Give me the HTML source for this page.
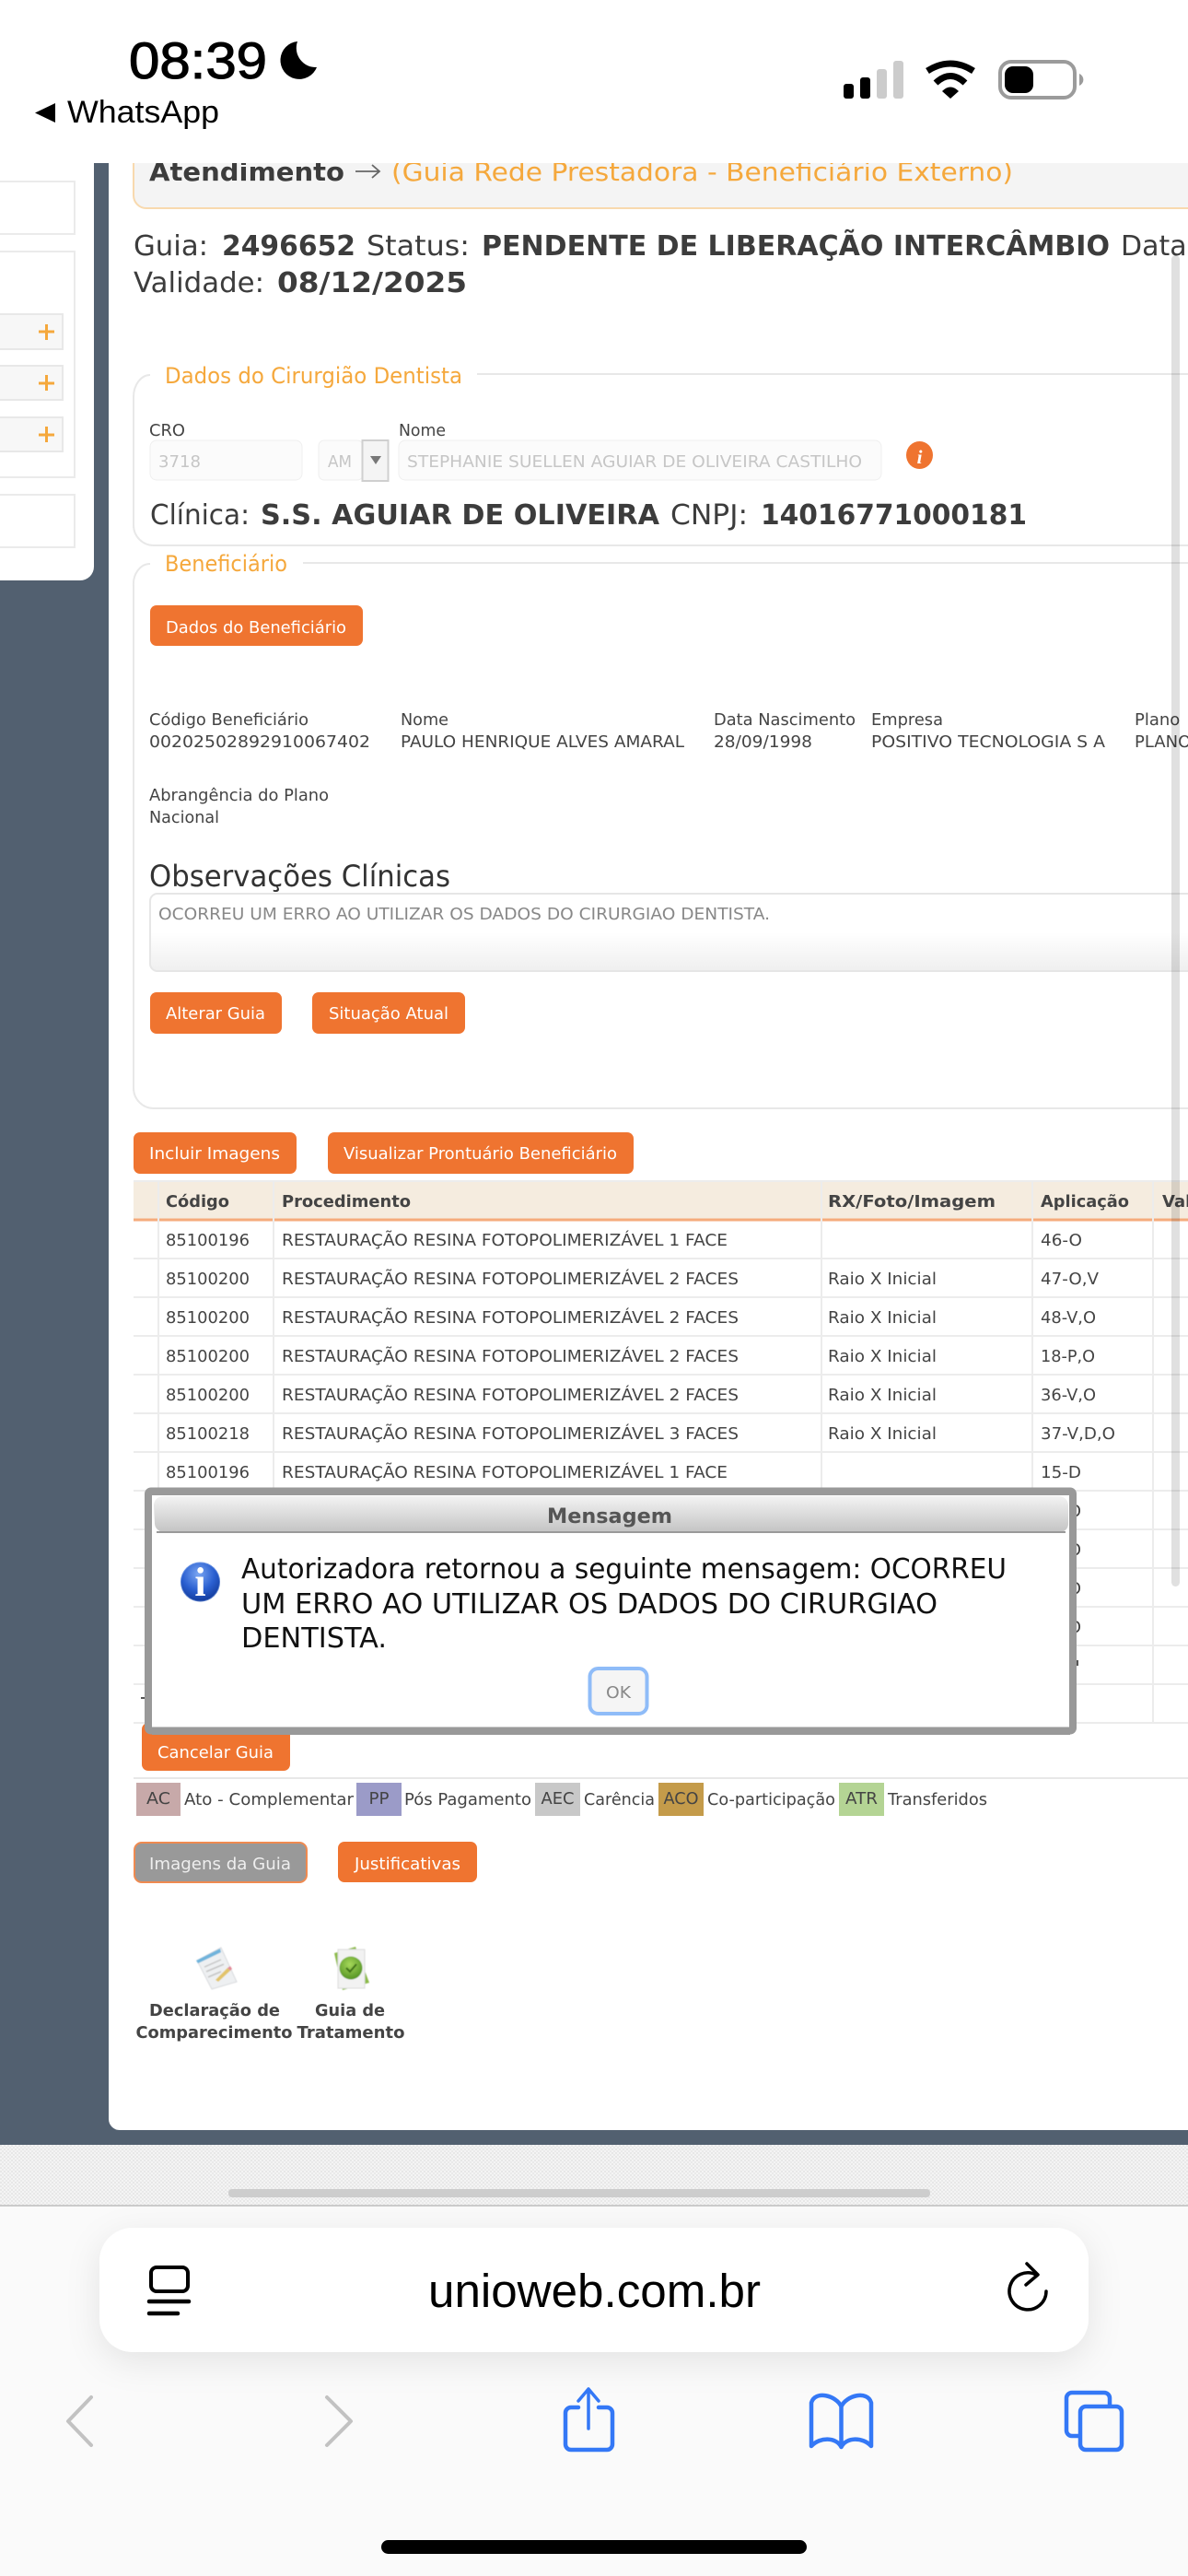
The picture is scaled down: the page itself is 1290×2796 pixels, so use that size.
<!DOCTYPE html>
<html lang="pt-BR">
<head>
<meta charset="utf-8">
<title>unioweb.com.br</title>
<style>
html,body{margin:0;padding:0;background:#fff;width:1290px;height:2796px;overflow:hidden}
svg{display:block}
text{font-family:"DejaVu Sans","Liberation Sans",sans-serif;font-size:18px;fill:#444;white-space:pre}
.b{font-weight:700}
.lg{font-size:30px;fill:#3c3c3c}
.h{font-size:28px}
.leg{font-size:24px;fill:#f5a83c}
.w{fill:#fff}
.dis{fill:#c6c6c6}
.ios{font-family:"Liberation Sans",Arial,sans-serif;fill:#000}
.msg{font-size:30px;fill:#111}
.row{stroke:#ececec;stroke-width:2}
.col{stroke:#ececec;stroke-width:2}
.bl{fill:none;stroke:#3478f6;stroke-width:4.5;stroke-linecap:round;stroke-linejoin:round}
.gr{fill:none;stroke:#c2c2c2;stroke-width:4;stroke-linecap:round;stroke-linejoin:round}
.btn{fill:#ef7430}
</style>
</head>
<body>
<svg xmlns="http://www.w3.org/2000/svg" width="1290" height="2796" viewBox="0 0 1290 2796">
<defs>
<linearGradient id="ta" x1="0" y1="0" x2="0" y2="1"><stop offset="0" stop-color="#fff"/><stop offset=".5" stop-color="#fff"/><stop offset="1" stop-color="#efefef"/></linearGradient>
<linearGradient id="tb" x1="0" y1="0" x2="0" y2="1"><stop offset="0" stop-color="#f3f3f3"/><stop offset="1" stop-color="#c4c4c4"/></linearGradient>
<radialGradient id="blue" cx=".45" cy=".3" r=".75"><stop offset="0" stop-color="#7aa6f2"/><stop offset=".55" stop-color="#2a5fd0"/><stop offset="1" stop-color="#0f3592"/></radialGradient>
<radialGradient id="grn" cx=".45" cy=".35" r=".7"><stop offset="0" stop-color="#a6d85a"/><stop offset="1" stop-color="#4f8f1f"/></radialGradient>
<pattern id="tex" width="4" height="4" patternUnits="userSpaceOnUse"><rect width="4" height="4" fill="#f4f4f4"/><rect width="2" height="2" fill="#e7e7e7"/><rect x="2" y="2" width="2" height="2" fill="#e9e9e9"/></pattern>
<filter id="sh" x="-10%" y="-40%" width="120%" height="200%"><feDropShadow dx="0" dy="10" stdDeviation="18" flood-color="#000" flood-opacity=".09"/></filter>
<filter id="soft"><feGaussianBlur stdDeviation=".5"/></filter>
</defs>

<!-- page background -->
<rect x="0" y="177" width="1290" height="2151" fill="#526070"/>
<path d="M118 177H1290V2312H130a12 12 0 0 1 -12 -12Z" fill="#fff"/>

<!-- left sidebar -->
<path d="M0 177H102V615a15 15 0 0 1 -15 15H0Z" fill="#fff"/>
<g fill="#fff" stroke="#ebebeb" stroke-width="2">
<rect x="-4" y="197" width="85" height="57"/>
<rect x="-4" y="273" width="85" height="245"/>
<rect x="-4" y="537" width="85" height="57"/>
</g>
<g fill="#f7f7f7" stroke="#e8e8e8" stroke-width="2">
<rect x="-4" y="341" width="72" height="38"/>
<rect x="-4" y="397" width="72" height="37"/>
<rect x="-4" y="453" width="72" height="37"/>
</g>
<g stroke="#f5a83c" stroke-width="3">
<path d="M42 360H59M50.5 352V369M42 416H59M50.5 407V424M42 472H59M50.5 463V480"/>
</g>

<!-- header -->
<path d="M145 170V212a14 14 0 0 0 14 14H1300V170Z" fill="#f4f4f4" stroke="#f8d9ae" stroke-width="2"/>
<text class="b h" x="162" y="196" textLength="212" lengthAdjust="spacingAndGlyphs" style="fill:#3c3c3c">Atendimento</text>
<path d="M386 186H412M404 179L412 186L404 193" fill="none" stroke="#666" stroke-width="1.8"/>
<text class="h" x="425" y="196" textLength="675" lengthAdjust="spacingAndGlyphs" style="fill:#f5a83c">(Guia Rede Prestadora - Beneficiário Externo)</text>

<!-- guia / status -->
<text class="lg" x="145" y="277" textLength="81" lengthAdjust="spacingAndGlyphs">Guia:</text>
<text class="lg b" x="241" y="277" textLength="145" lengthAdjust="spacingAndGlyphs">2496652</text>
<text class="lg" x="398" y="277" textLength="112" lengthAdjust="spacingAndGlyphs">Status:</text>
<text class="lg b" x="523" y="277" textLength="682" lengthAdjust="spacingAndGlyphs">PENDENTE DE LIBERAÇÃO INTERCÂMBIO</text>
<text class="lg" x="1217" y="277">Data</text>
<text class="lg" x="145" y="317" textLength="142" lengthAdjust="spacingAndGlyphs">Validade:</text>
<text class="lg b" x="301" y="317" textLength="206" lengthAdjust="spacingAndGlyphs">08/12/2025</text>

<!-- fieldset dentist -->
<path d="M163 407a18 24 0 0 0 -18 24V570a22 22 0 0 0 22 22H1290M518 406H1290" fill="none" stroke="#e8e8e8" stroke-width="2"/>
<text class="leg" x="179" y="416" textLength="323" lengthAdjust="spacingAndGlyphs">Dados do Cirurgião Dentista</text>
<text x="162" y="473" textLength="39" lengthAdjust="spacingAndGlyphs">CRO</text>
<text x="433" y="473" textLength="51" lengthAdjust="spacingAndGlyphs">Nome</text>
<rect x="163" y="478" width="165" height="43" rx="7" fill="#fbfbfb" stroke="#efefef"/>
<rect x="346" y="478" width="48" height="43" rx="6" fill="#fbfbfb" stroke="#efefef"/>
<rect x="393.500" y="478" width="28" height="44" fill="#f4f4f4" stroke="#cfcfcf" stroke-width="2"/>
<path d="M402 495H414L408 504Z" fill="#777"/>
<rect x="433" y="478" width="524" height="43" rx="7" fill="#fbfbfb" stroke="#efefef"/>
<text class="dis" x="172" y="507" textLength="46" lengthAdjust="spacingAndGlyphs">3718</text>
<text class="dis" x="356" y="507" textLength="26" lengthAdjust="spacingAndGlyphs">AM</text>
<text class="dis" x="442" y="507" textLength="494" lengthAdjust="spacingAndGlyphs">STEPHANIE SUELLEN AGUIAR DE OLIVEIRA CASTILHO</text>
<ellipse cx="998.500" cy="494" rx="14.500" ry="15" fill="#ef7430"/>
<text x="998.500" y="503" text-anchor="middle" class="b" style="font-size:21px;font-style:italic;fill:#fff;font-family:'Liberation Serif',serif">i</text>
<text class="lg" x="163" y="569" textLength="108" lengthAdjust="spacingAndGlyphs">Clínica:</text>
<text class="lg b" x="283" y="569" textLength="433" lengthAdjust="spacingAndGlyphs">S.S. AGUIAR DE OLIVEIRA</text>
<text class="lg" x="728" y="569" textLength="84" lengthAdjust="spacingAndGlyphs">CNPJ:</text>
<text class="lg b" x="826" y="569" textLength="289" lengthAdjust="spacingAndGlyphs">14016771000181</text>

<!-- fieldset beneficiario -->
<path d="M163 612a18 22 0 0 0 -18 24V1181a22 22 0 0 0 22 22H1290M329 611H1290" fill="none" stroke="#e8e8e8" stroke-width="2"/>
<text class="leg" x="179" y="620" textLength="133" lengthAdjust="spacingAndGlyphs">Beneficiário</text>
<rect class="btn" x="163" y="657" width="231" height="44" rx="7"/>
<text class="w" x="180" y="687" textLength="196" lengthAdjust="spacingAndGlyphs">Dados do Beneficiário</text>

<text x="162" y="787" textLength="173" lengthAdjust="spacingAndGlyphs">Código Beneficiário</text>
<text x="162" y="811" textLength="240" lengthAdjust="spacingAndGlyphs">00202502892910067402</text>
<text x="435" y="787" textLength="52" lengthAdjust="spacingAndGlyphs">Nome</text>
<text x="435" y="811" textLength="308" lengthAdjust="spacingAndGlyphs">PAULO HENRIQUE ALVES AMARAL</text>
<text x="775" y="787" textLength="154" lengthAdjust="spacingAndGlyphs">Data Nascimento</text>
<text x="775" y="811" textLength="107" lengthAdjust="spacingAndGlyphs">28/09/1998</text>
<text x="946" y="787" textLength="78" lengthAdjust="spacingAndGlyphs">Empresa</text>
<text x="946" y="811" textLength="254" lengthAdjust="spacingAndGlyphs">POSITIVO TECNOLOGIA S A</text>
<text x="1232" y="787">Plano</text>
<text x="1232" y="811">PLANO</text>
<text x="162" y="869" textLength="195" lengthAdjust="spacingAndGlyphs">Abrangência do Plano</text>
<text x="162" y="893" textLength="76" lengthAdjust="spacingAndGlyphs">Nacional</text>

<text x="162" y="962" textLength="327" lengthAdjust="spacingAndGlyphs" style="font-size:32px;fill:#333">Observações Clínicas</text>
<rect x="163" y="970" width="1140" height="84" rx="8" fill="url(#ta)" stroke="#e6e6e6" stroke-width="2"/>
<text x="172" y="998" textLength="664" lengthAdjust="spacingAndGlyphs" style="fill:#888">OCORREU UM ERRO AO UTILIZAR OS DADOS DO CIRURGIAO DENTISTA.</text>

<rect class="btn" x="163" y="1077" width="143" height="45" rx="7"/>
<text class="w" x="180" y="1106" textLength="108" lengthAdjust="spacingAndGlyphs">Alterar Guia</text>
<rect class="btn" x="339" y="1077" width="166" height="45" rx="7"/>
<text class="w" x="357" y="1106" textLength="130" lengthAdjust="spacingAndGlyphs">Situação Atual</text>

<rect class="btn" x="145" y="1229" width="177" height="45" rx="7"/>
<text class="w" x="162" y="1258" textLength="142" lengthAdjust="spacingAndGlyphs">Incluir Imagens</text>
<rect class="btn" x="356" y="1229" width="332" height="45" rx="7"/>
<text class="w" x="373" y="1258" textLength="297" lengthAdjust="spacingAndGlyphs">Visualizar Prontuário Beneficiário</text>

<!-- table -->
<rect x="145" y="1282" width="1145" height="41" fill="#f5ecdf"/>
<path d="M145 1282H1290" stroke="#ececec" stroke-width="2"/>
<path d="M145 1324H1290" stroke="#f5ab7c" stroke-width="3"/>
<path class="row" d="M145 1366H1290M145 1408H1290M145 1450H1290M145 1492H1290M145 1534H1290M145 1576H1290M145 1618H1290M145 1660H1290M145 1702H1290M145 1744H1290M145 1786H1290M145 1828H1290M145 1870H1290"/>
<path class="col" d="M172 1282V1870M297 1282V1870M892 1282V1870M1121 1282V1870M1252 1282V1870"/>

<text class="b" x="180" y="1310" textLength="69" lengthAdjust="spacingAndGlyphs">Código</text>
<text class="b" x="306" y="1310" textLength="140" lengthAdjust="spacingAndGlyphs">Procedimento</text>
<text class="b" x="899" y="1310" textLength="182" lengthAdjust="spacingAndGlyphs">RX/Foto/Imagem</text>
<text class="b" x="1130" y="1310" textLength="96" lengthAdjust="spacingAndGlyphs">Aplicação</text>
<text class="b" x="1262" y="1310">Val</text>

<text x="180" y="1352" textLength="91" lengthAdjust="spacingAndGlyphs">85100196</text>
<text x="306" y="1352" textLength="484" lengthAdjust="spacingAndGlyphs">RESTAURAÇÃO RESINA FOTOPOLIMERIZÁVEL 1 FACE</text>
<text x="1130" y="1352" textLength="45" lengthAdjust="spacingAndGlyphs">46-O</text>

<text x="180" y="1394" textLength="91" lengthAdjust="spacingAndGlyphs">85100200</text>
<text x="306" y="1394" textLength="496" lengthAdjust="spacingAndGlyphs">RESTAURAÇÃO RESINA FOTOPOLIMERIZÁVEL 2 FACES</text>
<text x="899" y="1394" textLength="118" lengthAdjust="spacingAndGlyphs">Raio X Inicial</text>
<text x="1130" y="1394" textLength="63" lengthAdjust="spacingAndGlyphs">47-O,V</text>

<text x="180" y="1436" textLength="91" lengthAdjust="spacingAndGlyphs">85100200</text>
<text x="306" y="1436" textLength="496" lengthAdjust="spacingAndGlyphs">RESTAURAÇÃO RESINA FOTOPOLIMERIZÁVEL 2 FACES</text>
<text x="899" y="1436" textLength="118" lengthAdjust="spacingAndGlyphs">Raio X Inicial</text>
<text x="1130" y="1436" textLength="60" lengthAdjust="spacingAndGlyphs">48-V,O</text>

<text x="180" y="1478" textLength="91" lengthAdjust="spacingAndGlyphs">85100200</text>
<text x="306" y="1478" textLength="496" lengthAdjust="spacingAndGlyphs">RESTAURAÇÃO RESINA FOTOPOLIMERIZÁVEL 2 FACES</text>
<text x="899" y="1478" textLength="118" lengthAdjust="spacingAndGlyphs">Raio X Inicial</text>
<text x="1130" y="1478" textLength="59" lengthAdjust="spacingAndGlyphs">18-P,O</text>

<text x="180" y="1520" textLength="91" lengthAdjust="spacingAndGlyphs">85100200</text>
<text x="306" y="1520" textLength="496" lengthAdjust="spacingAndGlyphs">RESTAURAÇÃO RESINA FOTOPOLIMERIZÁVEL 2 FACES</text>
<text x="899" y="1520" textLength="118" lengthAdjust="spacingAndGlyphs">Raio X Inicial</text>
<text x="1130" y="1520" textLength="60" lengthAdjust="spacingAndGlyphs">36-V,O</text>

<text x="180" y="1562" textLength="91" lengthAdjust="spacingAndGlyphs">85100218</text>
<text x="306" y="1562" textLength="496" lengthAdjust="spacingAndGlyphs">RESTAURAÇÃO RESINA FOTOPOLIMERIZÁVEL 3 FACES</text>
<text x="899" y="1562" textLength="118" lengthAdjust="spacingAndGlyphs">Raio X Inicial</text>
<text x="1130" y="1562" textLength="81" lengthAdjust="spacingAndGlyphs">37-V,D,O</text>

<text x="180" y="1604" textLength="91" lengthAdjust="spacingAndGlyphs">85100196</text>
<text x="306" y="1604" textLength="484" lengthAdjust="spacingAndGlyphs">RESTAURAÇÃO RESINA FOTOPOLIMERIZÁVEL 1 FACE</text>
<text x="1130" y="1604" textLength="44" lengthAdjust="spacingAndGlyphs">15-D</text>

<text x="1174" y="1646" text-anchor="end">O</text>
<text x="1174" y="1688" text-anchor="end">O</text>
<text x="1174" y="1730" text-anchor="end">O</text>
<text x="1174" y="1772" text-anchor="end">O</text>
<rect x="1169" y="1802" width="2" height="6" fill="#555"/>
<rect x="153" y="1842" width="5" height="2" fill="#555"/>

<!-- cancelar -->
<path d="M145 1930H1290" stroke="#e8e8e8" stroke-width="2"/>
<rect class="btn" x="154" y="1870" width="161" height="52" rx="7"/>
<text class="w" x="171" y="1908" textLength="126" lengthAdjust="spacingAndGlyphs">Cancelar Guia</text>

<!-- dialog -->
<rect x="161" y="1618.500" width="1004" height="260" rx="3" fill="#fff" stroke="#999" stroke-width="8"/>
<rect x="165" y="1875" width="997" height="8" fill="#999"/>
<rect x="165" y="1615" width="997" height="8" fill="#999"/>
<path d="M167 1634a10 10 0 0 1 10 -10H1150a10 10 0 0 1 10 10V1654a9 9 0 0 1 -9 9H178a10 10 0 0 1 -10 -9Z" fill="url(#tb)"/>
<path d="M170 1663H1157" stroke="#9a9a9a" stroke-width="2"/>
<text class="b" x="662" y="1653" text-anchor="middle" textLength="136" lengthAdjust="spacingAndGlyphs" style="font-size:22px;fill:#555">Mensagem</text>
<circle cx="217.500" cy="1717" r="21.500" fill="url(#blue)"/>
<circle cx="217.500" cy="1717" r="21" fill="none" stroke="#8fb3ef" stroke-width=".8" opacity=".6"/>
<text x="217.500" y="1732" text-anchor="middle" class="b" style="font-size:44px;fill:#fff;font-family:'Liberation Serif',serif">i</text>
<text class="msg" x="262" y="1713" textLength="831" lengthAdjust="spacingAndGlyphs">Autorizadora retornou a seguinte mensagem: OCORREU</text>
<text class="msg" x="262" y="1751" textLength="756" lengthAdjust="spacingAndGlyphs">UM ERRO AO UTILIZAR OS DADOS DO CIRURGIAO</text>
<text class="msg" x="262" y="1788" textLength="158" lengthAdjust="spacingAndGlyphs">DENTISTA.</text>
<rect x="640.500" y="1811" width="62" height="49" rx="9" fill="#f5f5f5" stroke="#8fbcf8" stroke-width="4"/>
<text x="671.500" y="1843" text-anchor="middle" textLength="27" lengthAdjust="spacingAndGlyphs" style="fill:#888">OK</text>

<!-- legenda -->
<rect x="148" y="1935" width="48" height="36" fill="#c7a9a9"/>
<rect x="387" y="1935" width="49" height="36" fill="#9b9bc8"/>
<rect x="581" y="1935" width="49" height="36" fill="#c8c8c8"/>
<rect x="715" y="1935" width="49" height="36" fill="#c49b4a"/>
<rect x="911" y="1935" width="49" height="36" fill="#b4d494"/>
<text x="172" y="1958" text-anchor="middle" textLength="26" lengthAdjust="spacingAndGlyphs">AC</text>
<text x="411.500" y="1958" text-anchor="middle" textLength="22" lengthAdjust="spacingAndGlyphs">PP</text>
<text x="605.500" y="1958" text-anchor="middle" textLength="36" lengthAdjust="spacingAndGlyphs">AEC</text>
<text x="739.500" y="1958" text-anchor="middle" textLength="38" lengthAdjust="spacingAndGlyphs">ACO</text>
<text x="935.500" y="1958" text-anchor="middle" textLength="35" lengthAdjust="spacingAndGlyphs">ATR</text>
<text x="200" y="1959" textLength="184" lengthAdjust="spacingAndGlyphs">Ato - Complementar</text>
<text x="439" y="1959" textLength="138" lengthAdjust="spacingAndGlyphs">Pós Pagamento</text>
<text x="634" y="1959" textLength="77" lengthAdjust="spacingAndGlyphs">Carência</text>
<text x="768" y="1959" textLength="139" lengthAdjust="spacingAndGlyphs">Co-participação</text>
<text x="964" y="1959" textLength="108" lengthAdjust="spacingAndGlyphs">Transferidos</text>

<rect x="146" y="2000" width="187" height="43" rx="8" fill="#999" stroke="#ef8a50" stroke-width="2"/>
<text x="162" y="2029" textLength="154" lengthAdjust="spacingAndGlyphs" style="fill:#eee">Imagens da Guia</text>
<rect class="btn" x="367" y="1999" width="151" height="44" rx="7"/>
<text class="w" x="385" y="2029" textLength="115" lengthAdjust="spacingAndGlyphs">Justificativas</text>

<!-- icones -->
<g filter="url(#soft)">
<path d="M214 2128L240 2114L257 2151L230 2159Z" fill="#eef0f2" stroke="#d8dadd"/>
<path d="M213 2128L239 2115L240 2119L215 2131Z" fill="#6fb4dc"/>
<path d="M222 2135L240 2127M224 2140L243 2132M226 2146L240 2140" stroke="#c4c4c4" stroke-width="1.500"/>
<path d="M234 2149L247 2136L250 2139L237 2151Z" fill="#e2c46a"/>
<path d="M247 2136L250 2134L252 2137L250 2139Z" fill="#e28a9a"/>
<path d="M363 2120L386 2113L401 2152L372 2160Z" fill="#8dbb4a"/>
<rect x="367" y="2116" width="29" height="42" fill="#f2f2f2" stroke="#dcdcdc"/>
<circle cx="381" cy="2136" r="12.500" fill="url(#grn)"/>
<path d="M376 2136L380 2140L387 2132" fill="none" stroke="#3d6f18" stroke-width="2"/>
</g>
<text class="b" x="233" y="2188" text-anchor="middle" textLength="142" lengthAdjust="spacingAndGlyphs">Declaração de</text>
<text class="b" x="232.500" y="2212" text-anchor="middle" textLength="170" lengthAdjust="spacingAndGlyphs">Comparecimento</text>
<text class="b" x="380" y="2188" text-anchor="middle" textLength="76" lengthAdjust="spacingAndGlyphs">Guia de</text>
<text class="b" x="381" y="2212" text-anchor="middle" textLength="117" lengthAdjust="spacingAndGlyphs">Tratamento</text>

<!-- scrollbar -->
<rect x="1272" y="277" width="9" height="1445" rx="4.500" fill="#000" opacity=".12"/>

<!-- top status bar -->
<rect x="0" y="0" width="1290" height="177" fill="#fff"/>
<text class="ios" x="140" y="85" textLength="150" lengthAdjust="spacingAndGlyphs" style="font-size:56px;stroke:#000;stroke-width:1.1px">08:39</text>
<path d="M323 45A20.500 20.500 0 1 0 344 73A21 21 0 0 1 323 45Z" fill="#000"/>
<path d="M60 112V133L38 122.500Z" fill="#000"/>
<text class="ios" x="73" y="133" textLength="165" lengthAdjust="spacingAndGlyphs" style="font-size:34px">WhatsApp</text>
<rect x="916" y="91" width="11" height="16" rx="3" fill="#000"/>
<rect x="934" y="84" width="11" height="23" rx="3" fill="#000"/>
<rect x="952" y="75" width="11" height="32" rx="3" fill="#ccc"/>
<rect x="970" y="66" width="11" height="41" rx="3" fill="#ccc"/>
<path d="M1007 77Q1032 61 1057 77" fill="none" stroke="#000" stroke-width="7"/>
<path d="M1016 90Q1032 75 1048 90" fill="none" stroke="#000" stroke-width="7"/>
<path d="M1032 107L1023 99Q1032 90 1041 99Z" fill="#000"/>
<rect x="1086" y="67" width="81" height="39" rx="12" fill="#fff" stroke="#9b9b9b" stroke-width="4"/>
<rect x="1091" y="72" width="31" height="29" rx="9" fill="#000"/>
<path d="M1172 80a7 7 0 0 1 0 13Z" fill="#9b9b9b"/>

<!-- textured strip and scrollbar -->
<rect x="0" y="2328" width="1290" height="66" fill="url(#tex)"/>
<rect x="248" y="2376" width="762" height="9" rx="4" fill="#cdcdcd"/>
<rect x="0" y="2394" width="1290" height="402" fill="#fafafa"/>
<path d="M0 2394H1290" stroke="#bdbdbd" stroke-width="1.500"/>

<!-- url pill -->
<rect x="108" y="2418" width="1074" height="135" rx="36" fill="#fff" filter="url(#sh)"/>
<rect x="164" y="2461" width="40" height="26" rx="6" fill="none" stroke="#000" stroke-width="4"/>
<path d="M162 2498H205" stroke="#000" stroke-width="4.500" stroke-linecap="round"/>
<path d="M162 2511H193" stroke="#000" stroke-width="4.500" stroke-linecap="round"/>
<text class="ios" x="645.500" y="2504" text-anchor="middle" textLength="361" lengthAdjust="spacingAndGlyphs" style="font-size:51px">unioweb.com.br</text>
<path d="M1136 2487A20 20 0 1 1 1125 2469" fill="none" stroke="#000" stroke-width="3.500" stroke-linecap="round"/>
<path d="M1115 2457L1127 2469L1114 2480" fill="none" stroke="#000" stroke-width="3.500" stroke-linecap="round" stroke-linejoin="round"/>

<!-- toolbar -->
<path class="gr" d="M99 2602L74 2628L99 2654"/>
<path class="gr" d="M355 2602L381 2628L355 2654"/>
<path class="bl" d="M628 2613H620a6 6 0 0 0 -6 6V2653a6 6 0 0 0 6 6H659a6 6 0 0 0 6 -6V2619a6 6 0 0 0 -6 -6H650"/>
<path class="bl" style="stroke-width:3.500" d="M639 2636V2593M628 2606L639 2593L650 2606"/>
<path class="bl" d="M913.500 2612C908 2600 885 2594 881 2608V2655C890 2645 908 2645 913.500 2656C919 2645 937 2645 946 2655V2608C942 2594 919 2600 913.500 2612V2656"/>
<path class="bl" d="M1205 2611V2603a6 6 0 0 0 -6 -6H1164a6 6 0 0 0 -6 6V2638a6 6 0 0 0 6 6H1171"/>
<rect x="1173" y="2612" width="45" height="47" rx="6" class="bl"/>
<rect x="414" y="2757" width="462" height="15" rx="7.500" fill="#000"/>
</svg>
</body>
</html>
